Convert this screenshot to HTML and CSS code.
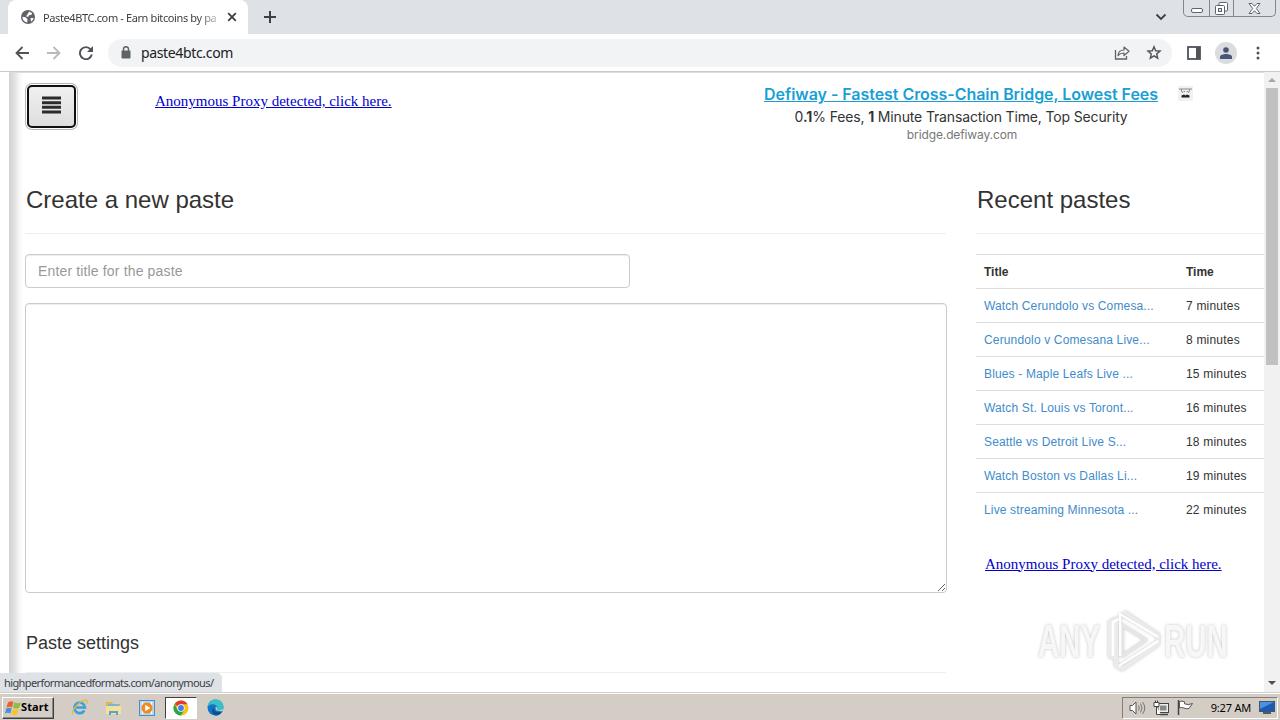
FILE: index.html
```html
<!DOCTYPE html>
<html lang="en">
<head>
    <meta charset="UTF-8">
    <meta name="viewport" content="width=device-width, initial-scale=1.0">
    <title>Paste4BTC.com - Earn bitcoins by pasting</title>
    <link rel="stylesheet" href="styles.css">
</head>
<body>
    <div class="screen">
        <!-- browser tabs -->
        <div class="tab-strip">
            <div class="tab">
                <svg class="globe" width="14" height="14" viewBox="0 0 14 14">
                    <circle cx="7" cy="7" r="7" fill="#5f6368"/>
                    <path d="M1.500 6.800 4.500 7.300 6.500 9.300 6.300 12.500C3.300 12 1.300 9.800 1.500 6.800zM8.200 1.400l3 1.800-1 1.800-2.200.2L7 7l-2-.8 1.500-2zM9.500 8h3c-.2 1.800-1.300 3-2.500 3.700z" fill="#fff"/>
                </svg>
                <span class="tab-title">Paste4BTC.com - Earn bitcoins by pa</span>
                <svg class="tab-close" width="10" height="10" viewBox="0 0 10 10">
                    <path d="M1.200 1.200l7.600 7.600M8.800 1.200L1.200 8.800" stroke="#3c4043" stroke-width="1.800"/>
                </svg>
            </div>
            <svg class="new-tab" width="12" height="12" viewBox="0 0 12 12">
                <path d="M6 0v12M0 6h12" stroke="#3c4043" stroke-width="2"/>
            </svg>
            <svg class="tab-search" width="12" height="8" viewBox="0 0 12 8">
                <path d="M1.500 1.500L6 6l4.500-4.500" fill="none" stroke="#3c4043" stroke-width="1.800"/>
            </svg>
            <div class="window-buttons">
                <span class="wb wb-min">
                    <svg width="12" height="5" viewBox="0 0 12 5"><rect x=".5" y=".5" width="11" height="4" rx="1.500" fill="#fff" stroke="#5c6370"/></svg>
                </span>
                <span class="wb wb-restore">
                    <svg width="13" height="13" viewBox="0 0 13 13">
                        <rect x="4" y=".5" width="8.500" height="8.500" rx="1" fill="#fff" stroke="#5c6370"/>
                        <rect x=".5" y="3.500" width="9" height="9" rx="1" fill="#fff" stroke="#5c6370"/>
                        <rect x="3.500" y="6.500" width="3" height="3" fill="#dee1e6" stroke="#5c6370"/>
                    </svg>
                </span>
                <span class="wb wb-close">
                    <svg width="13" height="11" viewBox="0 0 13 11">
                        <path d="M1 .5h3l2.500 2.800L9 .5h3L8.300 5.500l3.700 5H9L6.500 7.700 4 10.500H1l3.700-5z" fill="#fff" stroke="#5c6370"/>
                    </svg>
                </span>
            </div>
        </div>

        <!-- address bar -->
        <div class="toolbar">
            <svg class="nav-back" width="14" height="14" viewBox="0 0 14 14">
                <path d="M14 7H1.500M7.500 1L1.500 7l6 6" fill="none" stroke="#505357" stroke-width="1.800"/>
            </svg>
            <svg class="nav-forward" width="14" height="14" viewBox="0 0 14 14">
                <path d="M0 7h12.500M6.500 1l6 6-6 6" fill="none" stroke="#b8babd" stroke-width="1.800"/>
            </svg>
            <svg class="nav-reload" width="14" height="14" viewBox="0 0 14 14">
                <path d="M11.600 3.300A6 6 0 1 0 12.800 8.500" fill="none" stroke="#505357" stroke-width="1.900"/>
                <path d="M14 0v6H8z" fill="#505357"/>
            </svg>
            <div class="omnibox">
                <svg class="lock" width="10" height="13" viewBox="0 0 10 13">
                    <rect x=".5" y="4.500" width="9" height="8" rx="1" fill="#5f6368"/>
                    <path d="M2.500 5V3a2.500 2.300 0 0 1 5 0v2" fill="none" stroke="#5f6368" stroke-width="1.500"/>
                </svg>
                <span class="url">paste4btc.com</span>
                <svg class="share" width="16" height="14" viewBox="0 0 16 14">
                    <path d="M1.500 4v9h11v-3" fill="none" stroke="#5f6368" stroke-width="1.300"/>
                    <path d="M4 9.500C4.300 6 6.500 4 10 4V1l5 4.300-5 4.200V7C7.500 7 5.700 7.600 4 9.500z" fill="none" stroke="#5f6368" stroke-width="1.200" stroke-linejoin="round"/>
                </svg>
                <svg class="star" width="16" height="15" viewBox="0 0 16 15">
                    <path d="M8 1.800l1.700 4 4.300.3-3.300 2.800 1 4.300L8 10.900l-3.700 2.300 1-4.300L2 6.100l4.300-.3z" fill="none" stroke="#505357" stroke-width="1.400"/>
                </svg>
            </div>
            <svg class="side-panel" width="14" height="14" viewBox="0 0 14 14">
                <rect x="1" y="1" width="12" height="12" fill="#fff" stroke="#505357" stroke-width="1.800"/>
                <path d="M9 1h4v12H9z" fill="#505357"/>
            </svg>
            <span class="avatar">
                <svg width="12" height="12" viewBox="0 0 12 12" fill="#4a5576">
                    <circle cx="6" cy="3" r="2.800"/>
                    <path d="M0 12V9.800C0 8 3.500 7 6 7s6 1 6 2.800V12z"/>
                </svg>
            </span>
            <svg class="kebab" width="4" height="14" viewBox="0 0 4 14" fill="#505357">
                <circle cx="2" cy="2" r="1.500"/><circle cx="2" cy="7" r="1.500"/><circle cx="2" cy="12" r="1.500"/>
            </svg>
        </div>

        <!-- web page -->
        <div class="viewport">
            <div class="page">
                <header class="page-header">
                    <button class="menu-btn" aria-label="Menu">
                        <svg width="19" height="18" viewBox="0 0 19 18">
                            <path d="M0 2h19M0 6.700h19M0 11.300h19M0 16h19" stroke="#2b2b2b" stroke-width="2.900"/>
                        </svg>
                    </button>
                    <a class="proxy-link" href="#">Anonymous Proxy detected, click here.</a>
                    <div class="ad">
                        <a class="ad-title" href="#">Defiway - Fastest Cross-Chain Bridge, Lowest Fees</a>
                        <p class="ad-text">0<b>.1</b>% Fees, <b>1</b> Minute Transaction Time, Top Security</p>
                        <p class="ad-site">bridge.defiway.com</p>
                    </div>
                    <span class="ad-badge">
                        <svg width="13" height="11" viewBox="0 0 13 11">
                            <path d="M0 1h13M2 1l1.500 4M11 1L9.500 5M4.500 3.500h1.500M7.500 3.500H9" stroke="#888" fill="none"/>
                            <path d="M2.500 9.500V7.500L5 6.500l1.500 1 1.500-1 2.500 1v2z" fill="#222"/>
                        </svg>
                    </span>
                </header>

                <div class="columns">
                    <main class="create">
                        <h1>Create a new paste</h1>
                        <input class="title-input" type="text" placeholder="Enter title for the paste">
                        <textarea class="paste-text"></textarea>
                        <h2>Paste settings</h2>
                    </main>
                    <aside class="recent">
                        <h1>Recent pastes</h1>
                        <table>
                            <thead>
                                <tr><th>Title</th><th>Time</th></tr>
                            </thead>
                            <tbody>
                                <tr><td><a href="#">Watch Cerundolo vs Comesa...</a></td><td>7 minutes</td></tr>
                                <tr><td><a href="#">Cerundolo v Comesana Live...</a></td><td>8 minutes</td></tr>
                                <tr><td><a href="#">Blues - Maple Leafs Live ...</a></td><td>15 minutes</td></tr>
                                <tr><td><a href="#">Watch St. Louis vs Toront...</a></td><td>16 minutes</td></tr>
                                <tr><td><a href="#">Seattle vs Detroit Live S...</a></td><td>18 minutes</td></tr>
                                <tr><td><a href="#">Watch Boston vs Dallas Li...</a></td><td>19 minutes</td></tr>
                                <tr><td><a href="#">Live streaming Minnesota ...</a></td><td>22 minutes</td></tr>
                            </tbody>
                        </table>
                        <a class="proxy-link" href="#">Anonymous Proxy detected, click here.</a>
                    </aside>
                </div>
            </div>
            <div class="scrollbar">
                <span class="arrow arrow-up"></span>
                <span class="thumb"></span>
                <span class="arrow arrow-down"></span>
            </div>
            <div class="status-bubble">highperformancedformats.com/anonymous/</div>
            <div class="watermark">
                <span class="wm-text">ANY</span>
                <svg width="60" height="64" viewBox="0 0 60 64" fill="none" stroke-linejoin="round">
                    <path d="M20 3L54 26v9L18 60l-6-4v-6l-6-3V13l6-3v40" stroke="#ebebeb" stroke-width="4"/>
                    <path d="M18 16v31l24-16z" stroke="#e6e6e6" stroke-width="3"/>
                    <path d="M16 47V5l38 23M9 47V13l6-3M15 57l39-25" stroke="#fff" stroke-width="2.500"/>
                </svg>
                <span class="wm-text">RUN</span>
            </div>
        </div>

        <!-- windows taskbar -->
        <div class="taskbar">
            <div class="start">
                <svg width="17" height="16" viewBox="0 0 17 16">
                    <path d="M3 2.500Q6 .5 8.500 2L7 7.500Q4.500 6 1.500 7.500z" fill="#e8622c"/>
                    <path d="M9.500 2.300Q12 4 16 2.500L14 8Q11 9.200 8 7.800z" fill="#8cbf3f"/>
                    <path d="M1.200 8.500Q4 7 6.700 8.500L5.200 13.500Q2.500 12 0 13.500z" fill="#4a90d6"/>
                    <path d="M7.700 8.900Q10.500 10.500 13.700 9L12 14.500Q9 16 6.200 14z" fill="#f6c52e"/>
                </svg>
                <span>Start</span>
            </div>
            <span class="task">
                <svg width="17" height="17" viewBox="0 0 17 17" fill="none">
                    <path d="M13.300 11.500A5.300 5.300 0 1 1 14 8.500H5" stroke="#3ba1dc" stroke-width="2.600"/>
                    <path d="M2 15.500C-1 12 11-1 16 1.500c1 .8.300 2-.6 3.300" stroke="#e6b93c" stroke-width="1.200"/>
                </svg>
            </span>
            <span class="task">
                <svg width="17" height="16" viewBox="0 0 17 16">
                    <path d="M1 2h6l1 2h7v9H1z" fill="#e0b54c"/>
                    <path d="M3 4h11v4H3z" fill="#77b5d9"/>
                    <path d="M1 6h15v8H1z" fill="#f5e196"/>
                    <path d="M4 15v-4h9v4h-2v-2H6v2z" fill="#5aa4d0"/>
                </svg>
            </span>
            <span class="task">
                <svg width="16" height="16" viewBox="0 0 16 16">
                    <rect x=".5" y=".5" width="15" height="15" fill="#b9d7ee" stroke="#4c8ec4"/>
                    <path d="M3 2h1v12H3zM12 2h1v12h-1z" fill="#fff"/>
                    <circle cx="8" cy="8" r="5.500" fill="#f08a1d"/>
                    <path d="M6.200 4.800v6.400L11.300 8z" fill="#fff"/>
                </svg>
            </span>
            <span class="task task-active">
                <svg width="16" height="16" viewBox="0 0 16 16">
                    <circle cx="8" cy="8" r="7.500" fill="#fbc116"/>
                    <path d="M8 8L1.500 4.250A7.500 7.500 0 0 1 14.500 4.250H8z" fill="#e33b2e"/>
                    <path d="M1.500 4.250A7.500 7.500 0 0 0 8 15.500L11.250 9.900 8 8 4.750 9.900z" fill="#2da44e"/>
                    <circle cx="8" cy="8" r="3.700" fill="#fff"/>
                    <circle cx="8" cy="8" r="2.900" fill="#3f7ee8"/>
                </svg>
            </span>
            <span class="task">
                <svg width="17" height="17" viewBox="0 0 17 17">
                    <circle cx="8.500" cy="8.500" r="8" fill="#1474c4"/>
                    <path d="M.5 8C1 3 4.500.5 8.500.5c5 0 8 3.500 8 7 0 3-2 4-4 4s-3-.8-2-2C11 6 4 3 .5 8z" fill="#36c0c8"/>
                    <path d="M6.500 8.500C6 12 10 14.500 15 12.500c-1 2-3.500 4-6 4-4-1-5-6-2.500-8z" fill="#0b4f97"/>
                    <path d="M9 7.500c-1.500 3 1 5.500 6.500 4.500l1-2-4 1.500c-2 0-3-.8-2-2z" fill="#d6d0c8"/>
                </svg>
            </span>
            <div class="tray">
                <svg width="17" height="14" viewBox="0 0 17 14">
                    <path d="M1 4.500h2.500L7 1v12L3.500 9.500H1z" fill="#fff" stroke="#555"/>
                    <path d="M9.500 4.500q1.500 2.500 0 5M11.500 2.500q3 4.500 0 9M13.500 1q4.500 6 0 12" fill="none" stroke="#777"/>
                </svg>
                <svg width="17" height="16" viewBox="0 0 17 16">
                    <rect x="5" y="3.500" width="10.500" height="9" fill="#eee" stroke="#444"/>
                    <rect x="7" y="5.500" width="6.500" height="5" fill="#888"/>
                    <path d="M7 14.500h8" stroke="#444" stroke-width="1.500"/>
                    <path d="M1 2.500h5v4H1zM2.500 .5v2M4.500 .5v2M3.500 6.500v8H8" fill="#fff" stroke="#444"/>
                </svg>
                <svg width="17" height="15" viewBox="0 0 17 15">
                    <path d="M1.500 0v15" stroke="#444" stroke-width="1.500"/>
                    <path d="M2.500 1.500Q5 .5 7.500 1.800v2Q11 5.500 15.500 3.500L12 8.500Q9 9.300 7 8 4.500 7 2.500 8z" fill="#fff" stroke="#555"/>
                </svg>
                <span class="clock">9:27 AM</span>
                <svg width="16" height="13" viewBox="0 0 16 13">
                    <rect x=".5" y=".5" width="15" height="10" fill="#1c5bb5" stroke="#456"/>
                    <path d="M1 1h14L1 8z" fill="#4d92e0"/>
                    <path d="M4 12h8" stroke="#234" stroke-width="1.500"/>
                </svg>
            </div>
        </div>
    </div>
</body>
</html>
```
FILE: styles.css
```css
* {
    box-sizing: border-box;
    margin: 0;
    padding: 0;
}

body {
    width: 1280px;
    height: 720px;
    overflow: hidden;
    background-color: #fff;
    color: #333;
    font-family: "Liberation Sans", Arial, sans-serif;
}

svg {
    display: block;
    flex: none;
}

.screen {
    display: flex;
    flex-direction: column;
    height: 720px;
}

/* Tabs */
.tab-strip {
    display: flex;
    height: 34px;
    padding-left: 8px;
    background-color: #dee1e6;
}

.tab {
    display: flex;
    align-items: center;
    width: 240px;
    padding: 0 11px 0 13px;
    background-color: #fff;
    border-radius: 8px 8px 0 0;
}

.tab-title {
    flex: 1;
    margin: 0 8px 0 8px;
    white-space: nowrap;
    color: #3c4043;
    font-family: "Noto Sans", sans-serif;
    font-size: 11px;
    letter-spacing: -0.38px;
    -webkit-mask-image: linear-gradient(to right, #000 155px, transparent 182px);
    mask-image: linear-gradient(to right, #000 155px, transparent 182px);
}

.new-tab {
    margin: 11px 0 0 16px;
}

.tab-search {
    margin: 13px 16px 0 auto;
}

.window-buttons {
    display: flex;
    width: 93px;
    height: 17px;
    margin-right: 4px;
    border: 1px solid #82868f;
    border-top: 0;
    border-radius: 0 0 5px 5px;
}

.wb {
    display: flex;
    align-items: center;
    justify-content: center;
    flex: 1;
}

.wb-min {
    flex: 0 0 25px;
    padding-top: 5px;
}

.wb-restore {
    flex: 0 0 25px;
    border-left: 1px solid #82868f;
    border-right: 1px solid #82868f;
}

/* Address bar */
.toolbar {
    display: flex;
    align-items: center;
    height: 38px;
    padding: 0 20px 0 15px;
    border-bottom: 1px solid #c9cacc;
    background-color: #fff;
}

.nav-forward,
.nav-reload {
    margin-left: 18px;
}

.omnibox {
    display: flex;
    align-items: center;
    width: 1064px;
    height: 28px;
    margin-left: 15px;
    padding: 0 10px 0 13px;
    border-radius: 14px;
    background-color: #f1f3f4;
}

.url {
    margin-left: 10px;
    color: #202124;
    font-family: "Noto Sans", sans-serif;
    font-size: 14px;
    letter-spacing: -0.35px;
}

.share {
    margin-left: auto;
}

.star {
    margin-left: 16px;
}

.side-panel {
    margin-left: 15px;
}

.avatar {
    display: flex;
    align-items: center;
    justify-content: center;
    width: 22px;
    height: 22px;
    margin-left: 14px;
    border-radius: 50%;
    background-color: #dadce0;
}

.kebab {
    margin-left: auto;
}

/* Page */
.viewport {
    position: relative;
    display: flex;
    height: 620px;
}

.page {
    flex: 1;
    min-width: 0;
    margin-left: 9px;
    padding-left: 16px;
    overflow: hidden;
    border-top: 1px solid #ddd;
    background: linear-gradient(to right, #d2d2d2 0, #e0e0e0 5px, #f8f8f8 11px, #fff 15px);
}

.page-header {
    display: flex;
    align-items: flex-start;
    height: 107px;
    padding-top: 9px;
}

.menu-btn {
    display: flex;
    align-items: center;
    justify-content: center;
    width: 49px;
    height: 43px;
    margin: 3px 0 0 2px;
    padding-bottom: 3px;
    border: 2px solid #101010;
    border-radius: 5px;
    background: linear-gradient(#f0f0f0, #dedede);
    box-shadow: 0 0 0 1px #fff, 0 0 0 2px #b5b5b5;
}

.proxy-link {
    color: #0000cc;
    font-family: "Liberation Serif", "Times New Roman", serif;
    font-size: 15px;
    line-height: 18px;
}

.page-header .proxy-link {
    width: 240px;
    margin: 10px 0 0 79px;
    white-space: nowrap;
}

.ad {
    width: 420px;
    margin-left: 356px;
    text-align: center;
    white-space: nowrap;
    font-family: Inter, sans-serif;
}

.ad-title {
    display: block;
    color: #199fd6;
    font-size: 16px;
    font-weight: 600;
    line-height: 24px;
    letter-spacing: -0.05px;
}

.ad-text {
    padding-top: 1px;
    font-size: 14px;
    line-height: 20px;
    letter-spacing: -0.15px;
}

.ad-site {
    padding-left: 2px;
    color: #777;
    font-size: 12px;
    line-height: 16px;
    letter-spacing: -0.12px;
}

.ad-badge {
    display: flex;
    align-items: center;
    justify-content: center;
    width: 15px;
    height: 15px;
    margin: 4px 0 0 7px;
    background-color: #f1f1f1;
}

.columns {
    display: grid;
    grid-template-columns: 921px 300px;
    column-gap: 30px;
}

h1 {
    height: 54px;
    margin-bottom: 20px;
    padding: 6px 0 0 1px;
    border-bottom: 1px solid #eee;
    font-size: 24px;
    font-weight: 400;
    line-height: 28px;
}

h2 {
    height: 49px;
    margin-top: 31px;
    padding: 9px 0 0 1px;
    border-bottom: 1px solid #eee;
    font-size: 18px;
    font-weight: 400;
    line-height: 20px;
}

.title-input,
.paste-text {
    display: block;
    border: 1px solid #ccc;
    border-radius: 4px;
    background-color: #fff;
    box-shadow: inset 0 1px 1px rgba(0, 0, 0, 0.075);
    font-family: inherit;
    font-size: 14px;
}

.title-input {
    width: 605px;
    height: 34px;
    padding: 6px 12px;
}

.title-input::placeholder {
    color: #999;
    letter-spacing: 0.15px;
}

.paste-text {
    width: 922px;
    height: 290px;
    margin-top: 15px;
}

.recent table {
    width: 300px;
    border-collapse: collapse;
    table-layout: fixed;
    font-size: 12px;
    line-height: 17px;
}

.recent th,
.recent td {
    height: 34px;
    padding: 1px 8px 0;
    border-top: 1px solid #ddd;
    text-align: left;
    white-space: nowrap;
}

.recent td {
    padding-top: 2px;
    letter-spacing: 0.2px;
}

.recent th:first-child {
    width: 202px;
}

.recent td a {
    color: #428bca;
    letter-spacing: 0.15px;
    text-decoration: none;
}

.recent .proxy-link {
    display: block;
    margin: 28px 0 0 9px;
}

.scrollbar {
    display: flex;
    flex-direction: column;
    align-items: center;
    width: 16px;
    background-color: #f1f1f1;
}

.arrow {
    width: 0;
    height: 0;
    border: 4px solid transparent;
}

.arrow-up {
    margin-top: 2px;
    border-bottom-color: #a3a3a3;
}

.thumb {
    width: 12px;
    height: 277px;
    margin-top: 6px;
    background-color: #c1c1c1;
}

.arrow-down {
    margin: auto 0 3px;
    border-top-color: #505050;
}

.status-bubble {
    position: absolute;
    left: 0;
    bottom: 0;
    width: 222px;
    height: 19px;
    padding-left: 4px;
    border-radius: 0 5px 0 0;
    background-color: #dee1e6;
    color: #3c4043;
    font-family: "Noto Sans", sans-serif;
    font-size: 11px;
    line-height: 19px;
    letter-spacing: -0.6px;
    white-space: nowrap;
}

.watermark {
    position: absolute;
    left: 1038px;
    top: 537px;
    display: flex;
    align-items: center;
    width: 198px;
    height: 64px;
    filter: drop-shadow(0 0 1.5px #c4c4c4);
}

.wm-text {
    width: 66px;
    color: #f7f7f7;
    font-size: 46px;
    font-weight: 700;
    transform: scaleX(0.64);
    transform-origin: left;
}

/* Taskbar */
.taskbar {
    display: flex;
    align-items: center;
    height: 28px;
    padding: 2px 2px 0;
    border-top: 1px solid #d4d0c8;
    background-color: #d4cdc5;
    box-shadow: inset 0 1px 0 #fff;
}

.start {
    display: flex;
    align-items: center;
    width: 52px;
    height: 22px;
    margin-right: 9px;
    padding-left: 2px;
    border: 1px solid;
    border-color: #fff #404040 #404040 #fff;
    box-shadow: inset -1px -1px 0 #888;
    color: #000;
    font-family: "Noto Sans", sans-serif;
    font-size: 11px;
    font-weight: 700;
}

.start span {
    margin: -2px 0 0 -1px;
    letter-spacing: 0.1px;
}

.task {
    display: flex;
    align-items: center;
    justify-content: center;
    width: 32px;
    height: 22px;
    margin-right: 2px;
}

.task-active {
    border: 1px solid;
    border-color: #404040 #fff #fff #404040;
    background-color: #fff;
}

.tray {
    display: flex;
    align-items: center;
    width: 156px;
    height: 22px;
    margin-left: auto;
    padding: 0 2px 0 6px;
    border: 1px solid;
    border-color: #808080 #fff #fff #808080;
    gap: 7px;
}

.clock {
    margin: 0 1px 1px auto;
    color: #000;
    font-family: "Noto Sans", sans-serif;
    font-size: 11px;
    letter-spacing: -0.2px;
    white-space: nowrap;
}
```
